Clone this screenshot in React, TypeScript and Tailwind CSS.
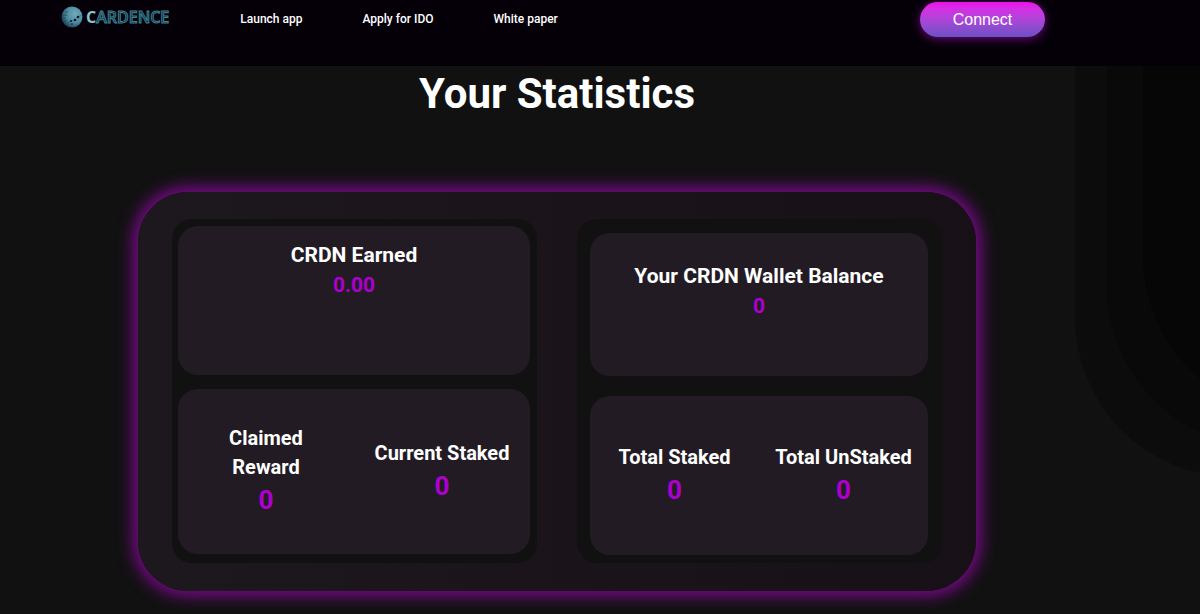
import React from 'react';

interface StatProps {
  label: string;
  value: string;
}

const navLinks = ['Launch app', 'Apply for IDO', 'White paper'];

const Logo: React.FC = () => (
  <a href="#" className="flex items-center gap-[3px] mt-[6px]" aria-label="Cardence">
    <svg viewBox="0 0 44 44" className="w-[22px] h-[22px]" aria-hidden="true">
      <defs>
        <radialGradient id="planet" cx="0.65" cy="0.35" r="0.7">
          <stop offset="0" stopColor="#75a9b8" />
          <stop offset="0.6" stopColor="#4a8ba0" />
          <stop offset="1" stopColor="#1c4354" />
        </radialGradient>
      </defs>
      <circle cx="22" cy="22" r="21" fill="url(#planet)" />
      <path d="M3 18h10M2 24h7M5 30h6M8 12h6" stroke="#1d4456" strokeWidth="1.5" />
      <path d="M12 34l8-4 9-2 5-6 7-4" stroke="#2b5c6e" strokeWidth="1" fill="none" />
      <g fill="#061722">
        <circle cx="20" cy="30" r="2" />
        <circle cx="28" cy="28" r="2.5" />
        <circle cx="34" cy="22" r="2.5" />
        <circle cx="22" cy="36" r="1.5" />
      </g>
    </svg>
    <span className="font-['Open_Sans',sans-serif] font-semibold text-base leading-[22px] text-[#0b2530] [-webkit-text-stroke:1px_#3b8295]">
      <span className="font-bold text-[#8cc5d2] [-webkit-text-stroke:0px]">C</span>ARDENCE
    </span>
  </a>
);

const Header: React.FC = () => (
  <header className="flex items-start h-[66px] pl-[61px] pr-[155px] bg-[#050008]">
    <Logo />
    <nav className="flex gap-[60px] ml-[71px] mt-[10px]">
      {navLinks.map(link => (
        <a key={link} href="#" className="text-xs leading-[18px] font-medium text-white whitespace-nowrap">
          {link}
        </a>
      ))}
    </nav>
    <button className="ml-auto mt-[2px] w-[125px] h-[35px] rounded-full bg-linear-to-b from-[#ec08ec] to-[#6a50c4] shadow-[0_2px_10px_#6a0878] font-['Liberation_Sans',sans-serif] text-base text-white">
      Connect
    </button>
  </header>
);

const Stat: React.FC<StatProps> = ({ label, value }) => (
  <div>
    <h2 className="text-[21px] leading-[30px] font-bold">{label}</h2>
    <p className="text-[21px] leading-[30px] font-bold text-[#ad00cf]">{value}</p>
  </div>
);

const HalfStat: React.FC<StatProps> = ({ label, value }) => (
  <div className="flex flex-col items-center">
    <h2 className="max-w-[144px] text-xl leading-[29px] font-bold">{label}</h2>
    <p className="text-[26px] leading-[37px] font-bold text-[#ad00cf]">{value}</p>
  </div>
);

const BackgroundRings: React.FC = () => (
  <div aria-hidden="true">
    <div className="absolute top-0 -right-[35px] w-40 h-[411px] rounded-bl-[160px] bg-[#0c0c0c]" />
    <div className="absolute top-0 -right-[67px] w-40 h-[381px] rounded-bl-[160px] bg-[#090909]" />
    <div className="absolute top-0 -right-[103px] w-40 h-[350px] rounded-bl-[160px] bg-[#060606]" />
  </div>
);

const App: React.FC = () => (
  <div className="min-h-screen flex flex-col bg-[#111111] font-[Roboto,sans-serif] text-white">
    <Header />
    <main className="relative grow overflow-hidden pr-[86px] pb-[23px]">
      <BackgroundRings />
      <div className="relative text-center">
        <h1 className="text-[42px] leading-[56px] font-bold">Your Statistics</h1>
        <section className="grid grid-cols-2 gap-10 max-w-[838px] mx-auto mt-[70px] px-[34px] pt-[27px] pb-7 rounded-[50px] bg-linear-to-r from-[#1d181e] to-[#181017] shadow-[0_0_16px_5px_#7b098c]">
          <div className="flex flex-col gap-[14px] pt-[7px] pl-[6px] pr-[7px] pb-[9px] rounded-[20px] bg-[#111111]">
            <div className="min-h-[149px] pt-[14px] rounded-[20px] bg-[#231b23]">
              <Stat label="CRDN Earned" value="0.00" />
            </div>
            <div className="grid grid-cols-2 items-center min-h-[165px] rounded-[20px] bg-[#231b23]">
              <HalfStat label="Claimed Reward" value="0" />
              <HalfStat label="Current Staked" value="0" />
            </div>
          </div>
          <div className="flex flex-col gap-5 pt-[14px] pl-[13px] pr-[14px] pb-2 rounded-[20px] bg-[#111111]">
            <div className="min-h-[143px] pt-7 rounded-[20px] bg-[#231b23]">
              <Stat label="Your CRDN Wallet Balance" value="0" />
            </div>
            <div className="grid grid-cols-2 items-center min-h-[159px] rounded-[20px] bg-[#231b23]">
              <HalfStat label="Total Staked" value="0" />
              <HalfStat label="Total UnStaked" value="0" />
            </div>
          </div>
        </section>
      </div>
    </main>
  </div>
);

export default App;
